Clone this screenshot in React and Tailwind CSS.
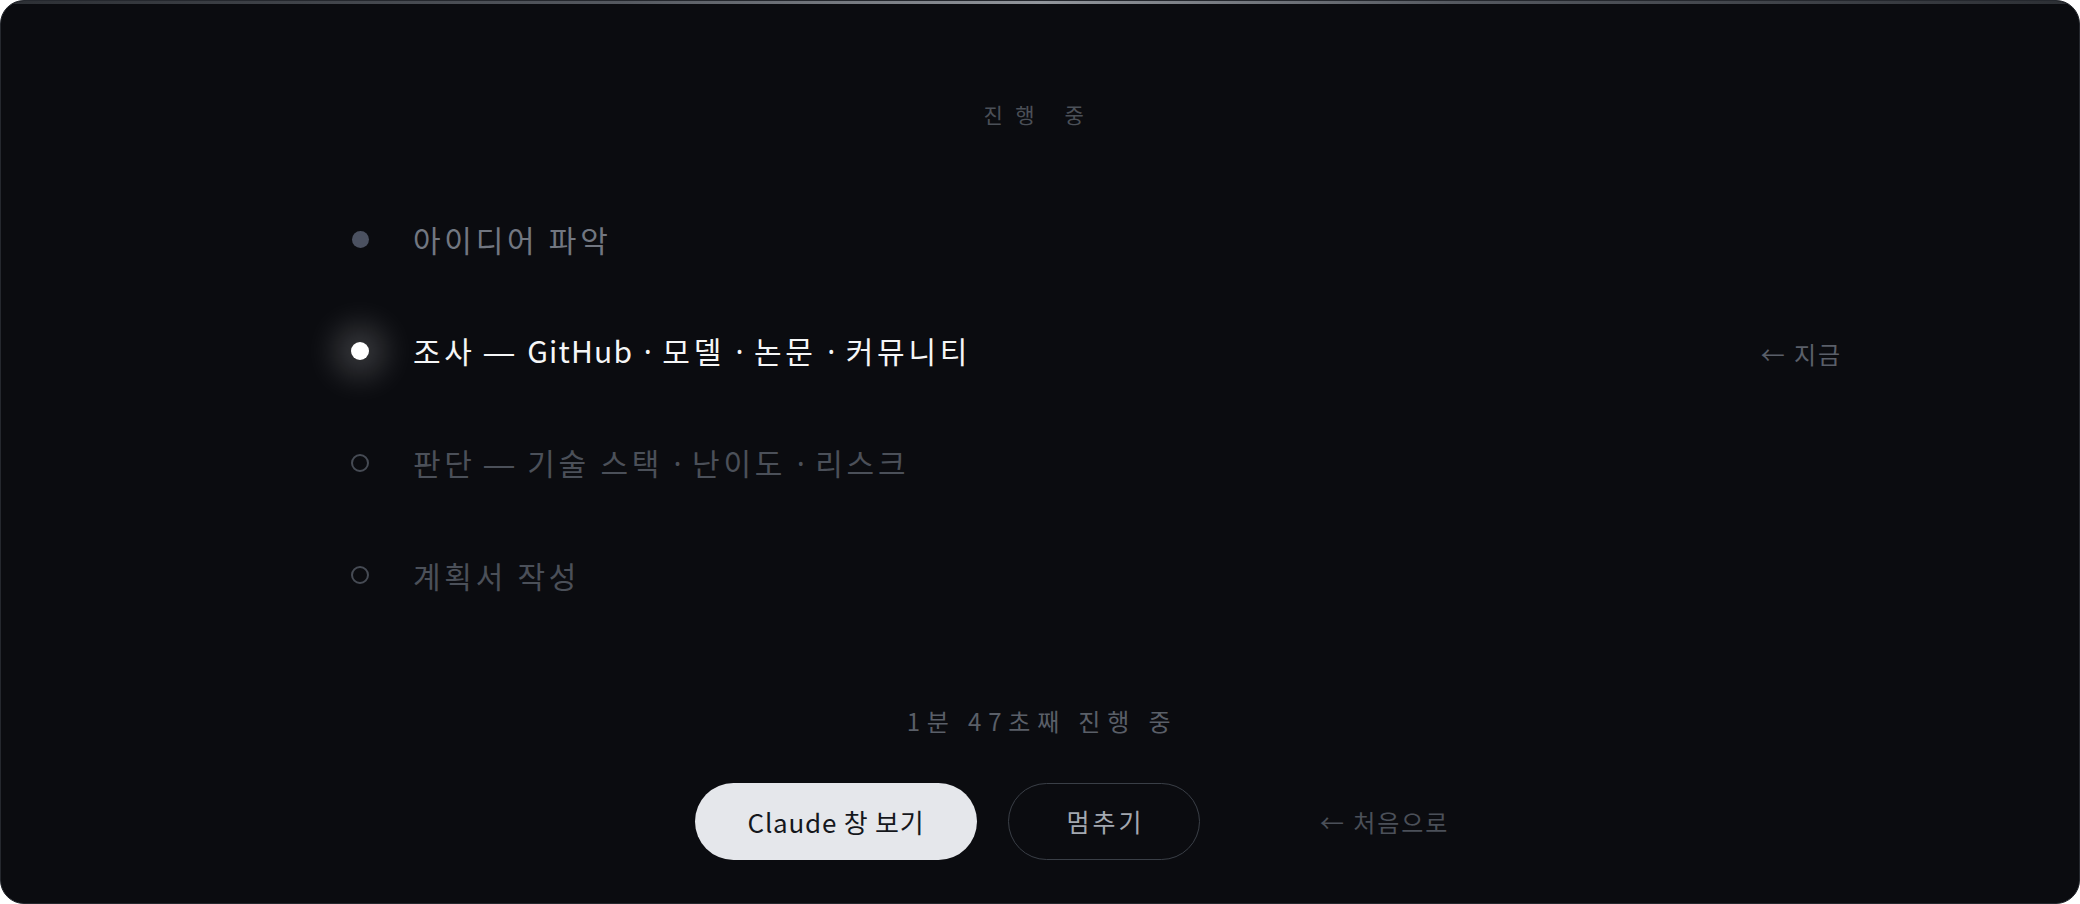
import React from "react";

const FONT = { fontFamily: '"Noto Sans CJK KR", "Noto Sans", sans-serif' };

function Bullet({ kind }) {
  if (kind === "done") {
    return <span className="block w-[17px] h-[17px] rounded-full bg-[#4b5160]" />;
  }
  if (kind === "active") {
    return (
      <span className="block w-[18px] h-[18px] rounded-full bg-white shadow-[0_0_32px_16px_rgba(255,255,255,0.2)]" />
    );
  }
  return <span className="block w-[18px] h-[18px] rounded-full border-2 border-[#464b54]" />;
}

function Segment({ text }) {
  const bits = text.split(/(GitHub|—)/);
  return (
    <>
      {bits.map((b, i) => {
        if (b === "GitHub")
          return (
            <span key={i} className="tracking-[0.04em]">
              {b}
            </span>
          );
        if (b === "—")
          return (
            <span key={i} className="inline-block scale-x-[1.25]">
              {b}
            </span>
          );
        return <React.Fragment key={i}>{b}</React.Fragment>;
      })}
    </>
  );
}

function StepText({ text }) {
  const parts = text.split(" · ");
  return (
    <>
      {parts.map((p, i) => (
        <React.Fragment key={i}>
          {i > 0 && (
            <>
              {" "}
              <span className="font-['Noto_Sans'] tracking-normal">·</span>{" "}
            </>
          )}
          <Segment text={p} />
        </React.Fragment>
      ))}
    </>
  );
}

const steps = [
  { kind: "done", text: "아이디어 파악", cls: "text-[#727781]" },
  { kind: "active", text: "조사 — GitHub · 모델 · 논문 · 커뮤니티", cls: "text-[#f5f6f7]", now: true },
  { kind: "todo", text: "판단 — 기술 스택 · 난이도 · 리스크", cls: "text-[#4b5059]" },
  { kind: "todo", text: "계획서 작성", cls: "text-[#4b5059]" },
];

export default function App() {
  return (
    <div className="w-[2080px] h-[904px] bg-white" style={FONT}>
      <div className="relative w-full h-full rounded-[24px] overflow-hidden bg-[#0b0c10] border border-[#25282e] flex flex-col">
        <div className="h-[3px] w-full shrink-0 bg-[linear-gradient(90deg,#2c2f34_0%,#555960_30%,#92969c_50%,#555960_70%,#2c2f34_100%)]" />
        <div className="flex justify-center pt-[96px]">
          <span className="text-[21px] leading-[28px] tracking-[0.6em] text-[#4b5058]">진행 중</span>
        </div>
        <div className="mt-[55px] pl-[349px] pr-[237px] flex flex-col">
          {steps.map((s, i) => (
            <div key={i} className="h-[112px] flex items-center">
              <div className="w-5 flex justify-center">
                <Bullet kind={s.kind} />
              </div>
              <span className={`ml-[43px] text-[30px] leading-[40px] tracking-[0.125em] whitespace-pre ${s.cls}`}>
                <StepText text={s.text} />
              </span>
              <div className="flex-1" />
              {s.now && (
                <span className="mt-[6px] text-[24px] leading-[30px] tracking-[0.08em] text-[#5a5f69]">← 지금</span>
              )}
            </div>
          ))}
        </div>
        <div className="flex justify-center mt-[74px]">
          <span className="text-[24px] leading-[32px] tracking-[0.285em] text-[#5a5f68] pl-[4px]">1분 47초째 진행 중</span>
        </div>
        <div className="flex items-center mt-[46px] pl-[694px]">
          <button className="w-[282px] h-[77px] rounded-full bg-[#e5e7eb] text-[#15171c] text-[26px] tracking-[0.03em]">
            Claude 창 보기
          </button>
          <button className="ml-[31px] w-[192px] h-[77px] rounded-full border-[1.5px] border-[#3a3f47] text-[#a3a8b0] text-[25px] tracking-[0.12em] pl-[3px]">
            멈추기
          </button>
          <span className="ml-[120px] text-[24px] leading-[32px] tracking-[0.08em] text-[#4b5059]">← 처음으로</span>
        </div>
      </div>
    </div>
  );
}
